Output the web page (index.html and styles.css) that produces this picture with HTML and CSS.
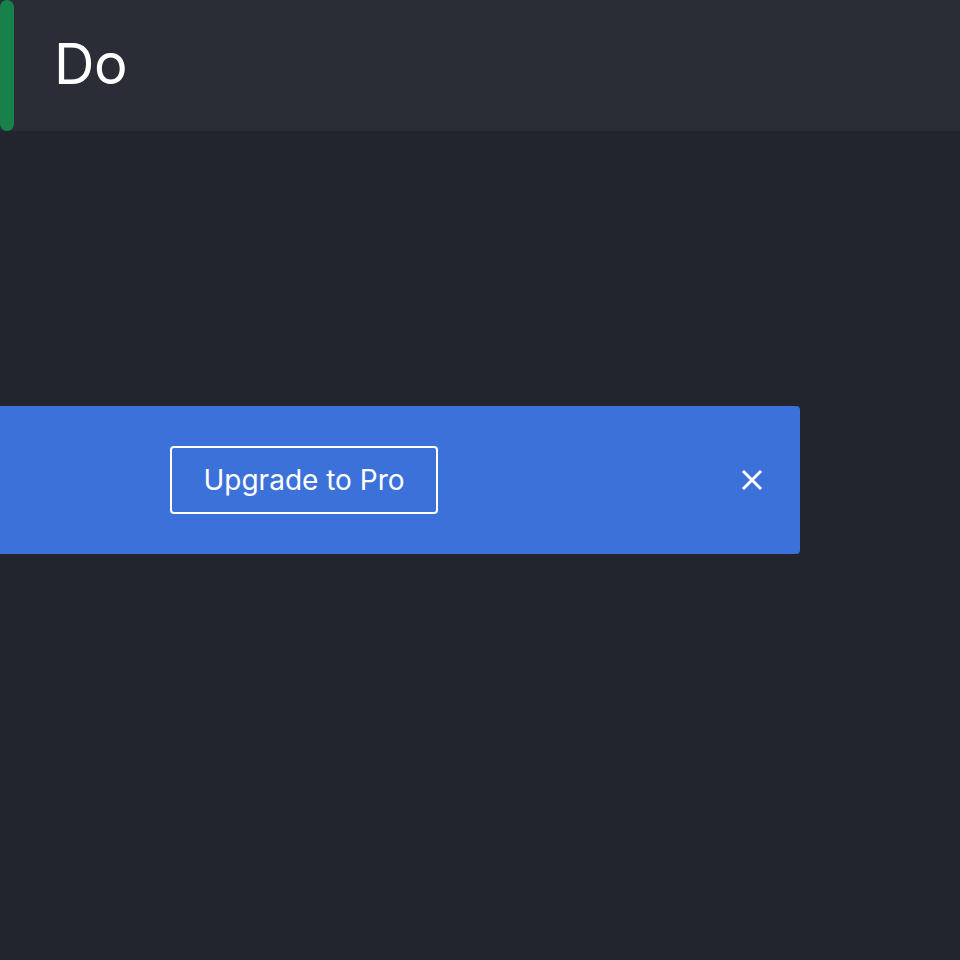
FILE: index.html
```html
<!DOCTYPE html>
<html>
<head>
<meta charset="utf-8">
<link rel="stylesheet" href="styles.css">
</head>
<body>
<header class="header">
  <div class="accent"></div>
  <h1 class="title">Do</h1>
</header>
<main class="main">
  <div class="banner">
    <button class="upgrade">Upgrade to Pro</button>
    <button class="close" aria-label="Close">
      <svg width="22" height="22" viewBox="0 0 22 22"><path d="M2 2L20 20M20 2L2 20" stroke="#fff" stroke-width="3" stroke-linecap="butt"/></svg>
    </button>
  </div>
</main>
</body>
</html>
```
FILE: styles.css
```css
* { box-sizing: border-box; }
html, body { margin: 0; padding: 0; }
body {
  background: #22252e;
  font-family: Inter, "Noto Sans", sans-serif;
  color: #fff;
  width: 960px;
  height: 960px;
  overflow: hidden;
}
.header {
  height: 131px;
  background: #2a2d36;
  display: flex;
  align-items: center;
  gap: 40px;
}
.accent {
  width: 14px;
  height: 131px;
  background: #18814a;
  align-self: flex-start;
  border-radius: 7px;
}
.title {
  margin: 0 0 4px 0;
  font-weight: 400;
  font-size: 56px;
  line-height: 1;
  letter-spacing: -0.5px;
}
.main {
  padding-top: 275px;
}
.banner {
  width: 800px;
  height: 148px;
  background: #3c71d9;
  border-radius: 0 4px 4px 0;
  display: flex;
  align-items: center;
  padding-left: 170px;
  padding-right: 37px;
  justify-content: space-between;
}
.upgrade {
  width: 268px;
  height: 68px;
  background: transparent;
  border: 2px solid #fff;
  border-radius: 4px;
  color: #fff;
  font-family: Inter, "Noto Sans", sans-serif;
  font-size: 28px;
  font-weight: 400;
  padding: 0;
}
.close {
  background: none;
  border: none;
  padding: 0;
  width: 22px;
  height: 22px;
  display: flex;
}
```
